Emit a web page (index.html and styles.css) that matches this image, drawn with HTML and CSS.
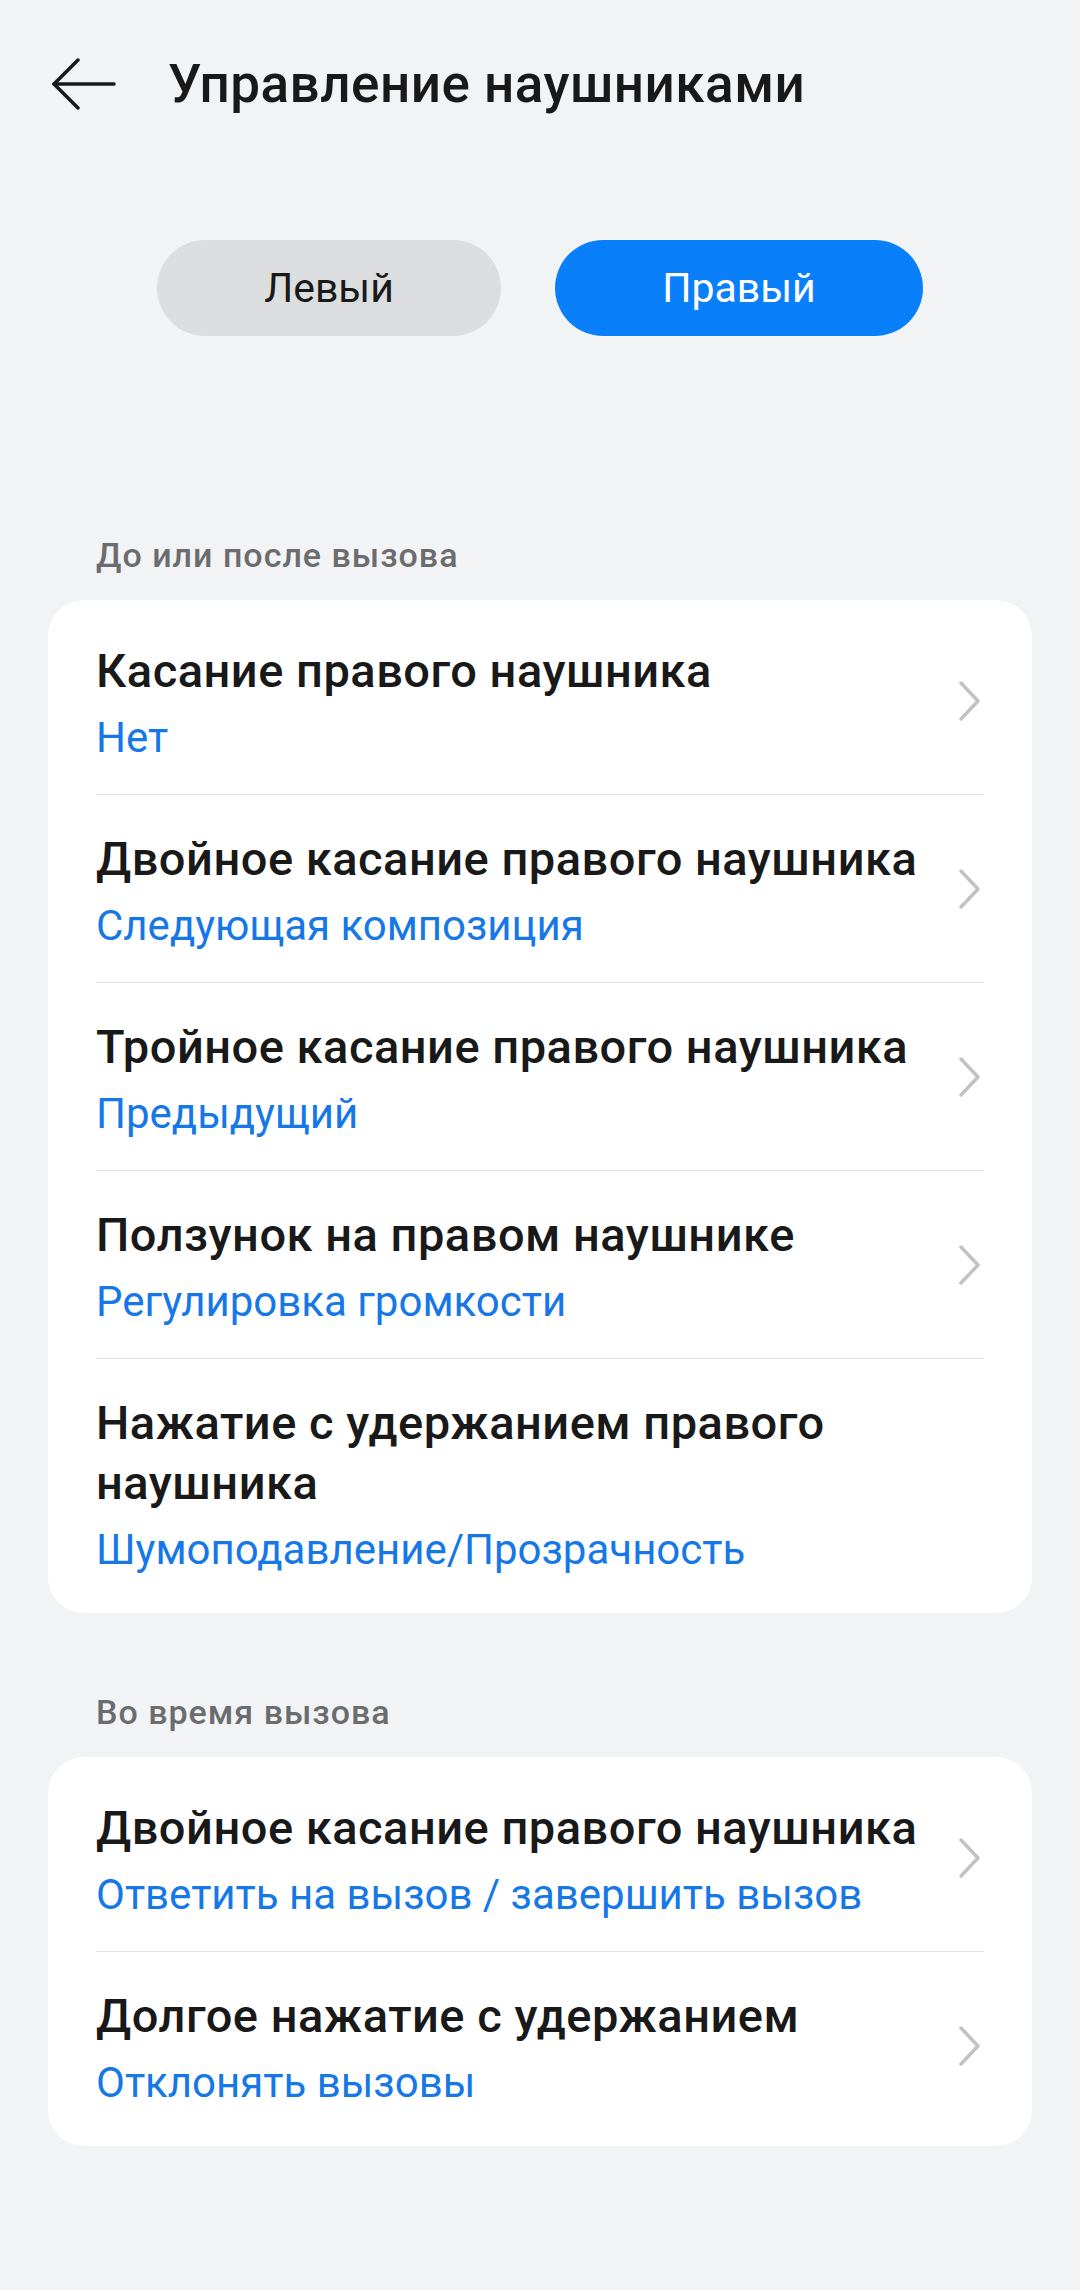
FILE: index.html
```html
<!DOCTYPE html>
<html lang="ru">
<head>
	<meta charset="UTF-8">
	<title>Управление наушниками</title>
	<link rel="stylesheet" href="styles.css">
</head>
<body>
<div class="topbar">
	<svg class="back" width="64" height="52" viewBox="0 0 64 52">
		<polyline points="26,2 2,26 26,50" />
		<line x1="2" y1="26" x2="62" y2="26" />
	</svg>
	<h1 class="title">Управление наушниками</h1>
</div>

<div class="segments">
	<div class="seg seg-left">Левый</div>
	<div class="seg seg-right active">Правый</div>
</div>

<div class="group-title first">До или после вызова</div>
<div class="card">
	<div class="row">
		<div class="row-text">
			<div class="row-title">Касание правого наушника</div>
			<div class="row-value">Нет</div>
		</div>
		<svg class="chev" width="24" height="42" viewBox="0 0 24 42"><polyline points="3,3 20,21 3,39"/></svg>
	</div>
	<div class="row">
		<div class="row-text">
			<div class="row-title">Двойное касание правого наушника</div>
			<div class="row-value">Следующая композиция</div>
		</div>
		<svg class="chev" width="24" height="42" viewBox="0 0 24 42"><polyline points="3,3 20,21 3,39"/></svg>
	</div>
	<div class="row">
		<div class="row-text">
			<div class="row-title">Тройное касание правого наушника</div>
			<div class="row-value">Предыдущий</div>
		</div>
		<svg class="chev" width="24" height="42" viewBox="0 0 24 42"><polyline points="3,3 20,21 3,39"/></svg>
	</div>
	<div class="row">
		<div class="row-text">
			<div class="row-title">Ползунок на правом наушнике</div>
			<div class="row-value">Регулировка громкости</div>
		</div>
		<svg class="chev" width="24" height="42" viewBox="0 0 24 42"><polyline points="3,3 20,21 3,39"/></svg>
	</div>
	<div class="row">
		<div class="row-text">
			<div class="row-title">Нажатие с удержанием правого наушника</div>
			<div class="row-value">Шумоподавление/Прозрачность</div>
		</div>
	</div>
</div>

<div class="group-title">Во время вызова</div>
<div class="card">
	<div class="row">
		<div class="row-text">
			<div class="row-title">Двойное касание правого наушника</div>
			<div class="row-value">Ответить на вызов / завершить вызов</div>
		</div>
		<svg class="chev" width="24" height="42" viewBox="0 0 24 42"><polyline points="3,3 20,21 3,39"/></svg>
	</div>
	<div class="row">
		<div class="row-text">
			<div class="row-title">Долгое нажатие с удержанием</div>
			<div class="row-value">Отклонять вызовы</div>
		</div>
		<svg class="chev" width="24" height="42" viewBox="0 0 24 42"><polyline points="3,3 20,21 3,39"/></svg>
	</div>
</div>
</body>
</html>
```

FILE: styles.css
```css
body {
	margin: 0;
	background-color: #f1f3f5;
	font-family: Roboto, "Noto Sans", sans-serif;
	color: #191919;
}
.topbar {
	height: 168px;
	display: flex;
	align-items: center;
	padding-left: 52px;
}
.back {
	fill: none;
	stroke: #191919;
	stroke-width: 3.5;
	stroke-linecap: round;
	stroke-linejoin: round;
}
.title {
	margin: 0 0 0 52px;
	font-size: 53px;
	font-weight: 500;
	letter-spacing: 0.5px;
}
.segments {
	display: flex;
	justify-content: center;
	gap: 54px;
	margin-top: 72px;
}
.seg {
	height: 96px;
	border-radius: 48px;
	display: flex;
	align-items: center;
	justify-content: center;
	font-size: 41px;
	background-color: #dcdddf;
	color: #191919;
}
.seg-left {
	width: 344px;
}
.seg-right {
	width: 368px;
}
.seg.active {
	background-color: #0a7ffa;
	color: #ffffff;
}
.group-title {
	font-size: 34px;
	line-height: 44px;
	font-weight: 500;
	letter-spacing: 1px;
	color: #6b6c6e;
	padding-left: 96px;
	margin: 77px 0 23px;
}
.group-title.first {
	margin-top: 197px;
}
.card {
	margin: 0 48px;
	background-color: #ffffff;
	border-radius: 36px;
	padding: 7px 48px;
}
.row {
	display: flex;
	align-items: center;
	padding: 34px 0 28px;
	border-bottom: 1px solid #e3e4e6;
}
.row:last-child {
	border-bottom: none;
}
.row-text {
	flex: 1;
}
.row-title {
	font-size: 47px;
	line-height: 60px;
	font-weight: 500;
	letter-spacing: 0.5px;
}
.row-value {
	margin-top: 9px;
	font-size: 42px;
	line-height: 56px;
	color: #1677e6;
}
.chev {
	fill: none;
	stroke: #c2c2c2;
	stroke-width: 3.5;
	stroke-linecap: round;
	stroke-linejoin: round;
	margin: 0 2px 6px 0;
}
```
